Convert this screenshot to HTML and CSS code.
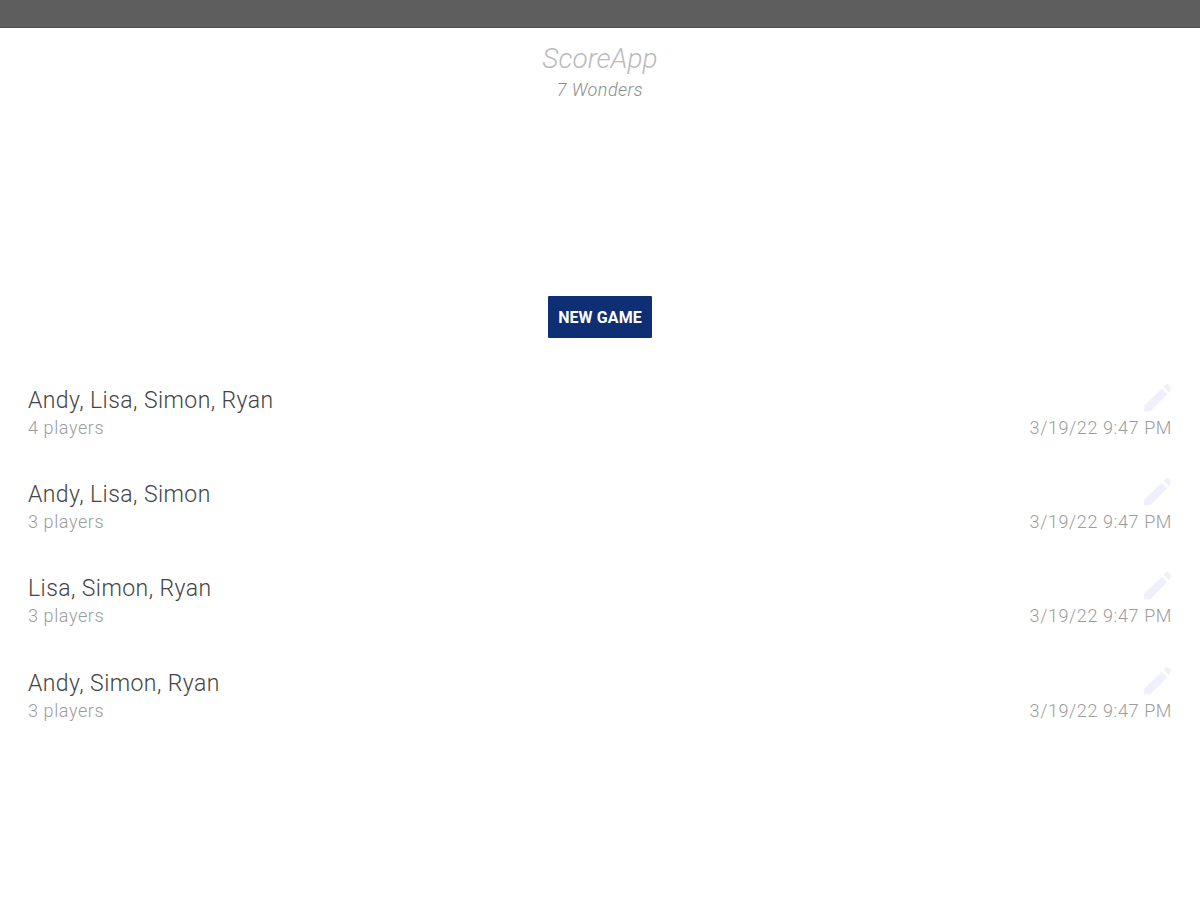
FILE: index.html
```html
<!DOCTYPE html>
<html lang="en">
<head>
<meta charset="utf-8">
<title>ScoreApp</title>
<link rel="stylesheet" href="styles.css">
</head>
<body>
<div class="statusbar"></div>
<header class="titles">
  <div class="app-title">ScoreApp</div>
  <div class="app-sub">7 Wonders</div>
</header>
<div class="actions"><button class="new-game">NEW GAME</button></div>
<ul class="games">
  <li class="game">
    <div class="left"><div class="names">Andy, Lisa, Simon, Ryan</div><div class="count">4 players</div></div>
    <div class="right"><svg class="pencil" viewBox="0 0 32 32"><path d="M2 30 L2.5 24 L21 6 L27 12 L9 30 Z"/><path d="M23 4 L25.5 1.5 Q27 0.5 28.5 1.8 L30.5 3.8 Q31.5 5.5 30.2 7 L29 10 Z"/></svg><div class="date">3/19/22 9:47 PM</div></div>
  </li>
  <li class="game">
    <div class="left"><div class="names">Andy, Lisa, Simon</div><div class="count">3 players</div></div>
    <div class="right"><svg class="pencil" viewBox="0 0 32 32"><path d="M2 30 L2.5 24 L21 6 L27 12 L9 30 Z"/><path d="M23 4 L25.5 1.5 Q27 0.5 28.5 1.8 L30.5 3.8 Q31.5 5.5 30.2 7 L29 10 Z"/></svg><div class="date">3/19/22 9:47 PM</div></div>
  </li>
  <li class="game">
    <div class="left"><div class="names">Lisa, Simon, Ryan</div><div class="count">3 players</div></div>
    <div class="right"><svg class="pencil" viewBox="0 0 32 32"><path d="M2 30 L2.5 24 L21 6 L27 12 L9 30 Z"/><path d="M23 4 L25.5 1.5 Q27 0.5 28.5 1.8 L30.5 3.8 Q31.5 5.5 30.2 7 L29 10 Z"/></svg><div class="date">3/19/22 9:47 PM</div></div>
  </li>
  <li class="game">
    <div class="left"><div class="names">Andy, Simon, Ryan</div><div class="count">3 players</div></div>
    <div class="right"><svg class="pencil" viewBox="0 0 32 32"><path d="M2 30 L2.5 24 L21 6 L27 12 L9 30 Z"/><path d="M23 4 L25.5 1.5 Q27 0.5 28.5 1.8 L30.5 3.8 Q31.5 5.5 30.2 7 L29 10 Z"/></svg><div class="date">3/19/22 9:47 PM</div></div>
  </li>
</ul>
</body>
</html>
```
FILE: styles.css
```css
* { box-sizing: border-box; }
html, body { margin: 0; padding: 0; background: #fff; }
body { width: 1200px; height: 900px; overflow: hidden; font-family: Roboto, sans-serif; }
.statusbar { height: 28px; background: #5e5e5e; border-bottom: 1px solid #4f4f4f; }
.titles { text-align: center; padding-top: 12px; }
.app-title { font-size: 28px; line-height: 37px; font-style: italic; font-weight: 300; color: #bbb; }
.app-sub { font-size: 18px; line-height: 24px; padding-top: 1px; font-style: italic; font-weight: 300; letter-spacing: 0.45px; color: #8c8c8c; }
.actions { display: flex; justify-content: center; margin-top: 194px; }
.new-game { width: 104px; height: 42px; border: 0; border-radius: 1px; padding: 0; background: #0e2f74; color: #fff; font-family: Roboto, sans-serif; font-weight: 700; font-size: 16px; letter-spacing: 0.1px; }
.games { list-style: none; margin: 32.5px 0 0; padding: 0 28px; }
.game { display: flex; justify-content: space-between; align-items: flex-end; height: 94.3px; padding-bottom: 25px; }
.names { font-size: 23px; line-height: 30px; font-weight: 300; letter-spacing: 0.42px; color: #444; }
.count { font-size: 18px; line-height: 24px; font-weight: 300; letter-spacing: 0.6px; color: #9c9c9c; }
.right { display: flex; flex-direction: column; align-items: flex-end; }
.pencil { width: 30px; height: 30px; fill: #f0effc; margin-bottom: 3px; }
.date { font-size: 18px; line-height: 24px; font-weight: 300; letter-spacing: 0.6px; color: #9c9c9c; }
```
